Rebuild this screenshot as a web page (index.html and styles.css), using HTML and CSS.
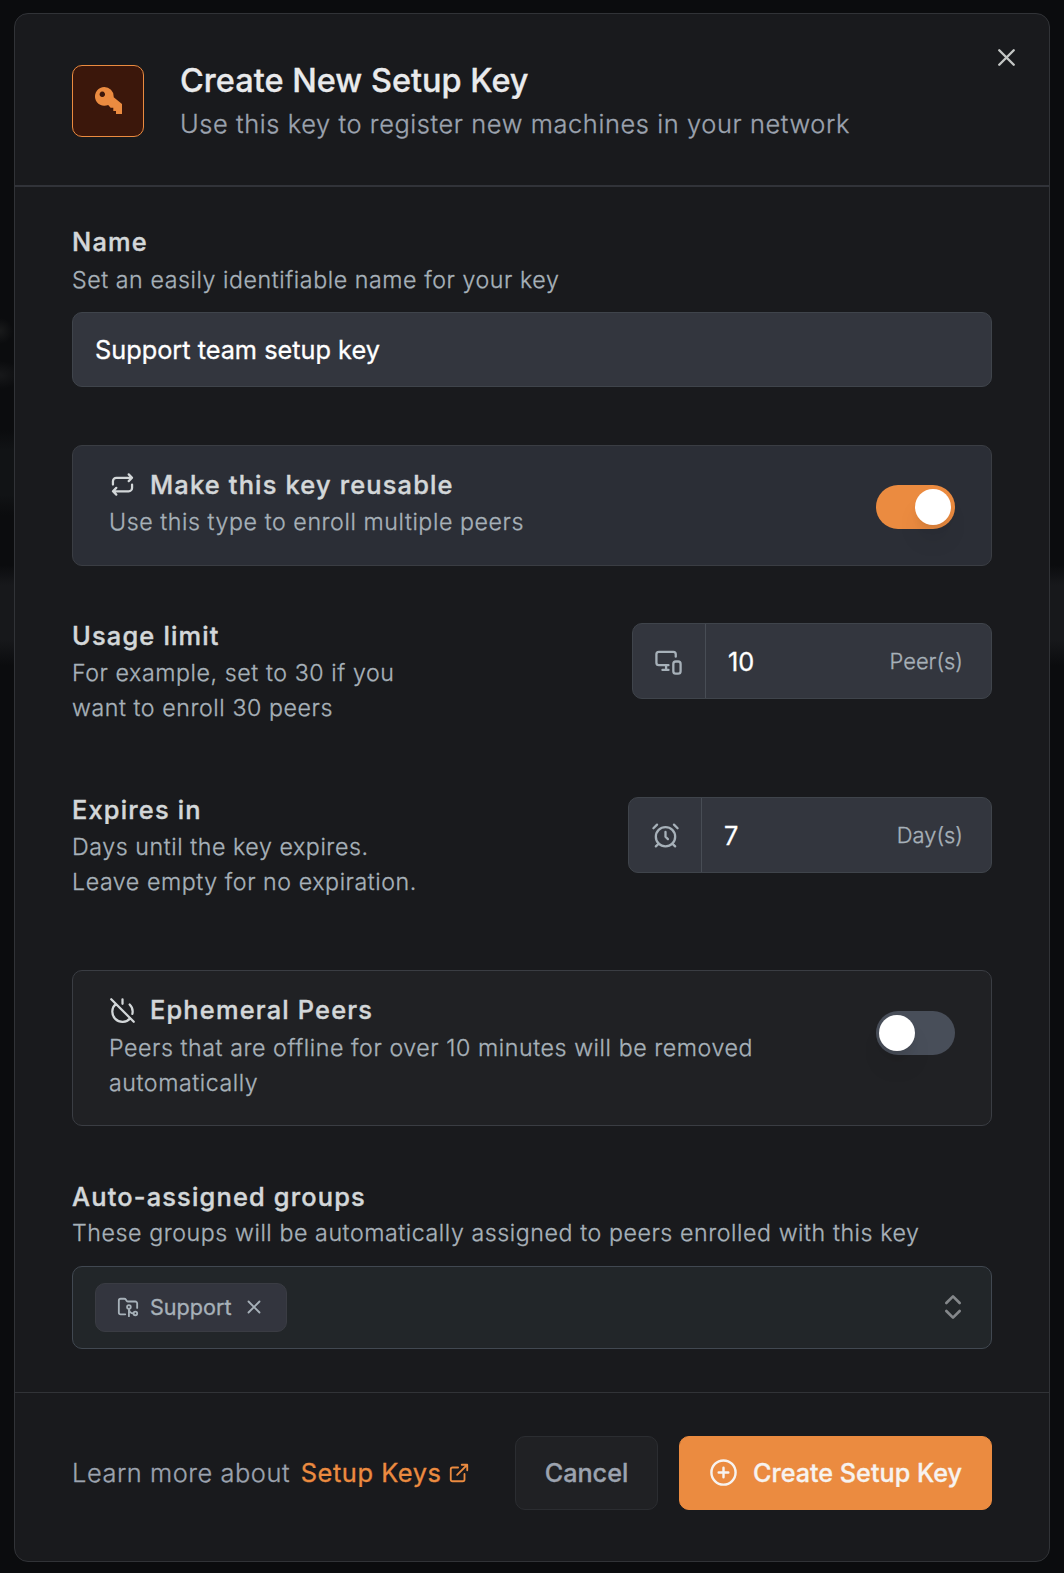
FILE: index.html
```html
<!DOCTYPE html>
<html lang="en">
<head>
<meta charset="utf-8">
<title>Create New Setup Key</title>
<link rel="stylesheet" href="styles.css">
</head>
<body>
<div class="modal" role="dialog">
  <header class="modal-header">
    <div class="key-box">
      <svg width="28" height="28" viewBox="0 0 28 28"><path fill="currentColor" fill-rule="evenodd" d="M10.300 0a9.400 9.400 0 0 1 9.400 9.400v.9L28 17v10h-6v-3h-2.700v-3.300h-2.700l-2.400-2.700A9.400 9.400 0 1 1 10.300 0zM8.300 4.600a2.700 2.700 0 1 0 .01 0z"/></svg>
    </div>
    <div class="heading">
      <h1>Create New Setup Key</h1>
      <p>Use this key to register new machines in your network</p>
    </div>
    <button class="close" aria-label="Close"><svg class="icon" width="29" height="29" viewBox="0 0 24 24"><path d="M18 6 6 18M6 6l12 12"/></svg></button>
  </header>

  <main class="modal-body">
    <section class="name-field">
      <label class="label">Name</label>
      <p class="help">Set an easily identifiable name for your key</p>
      <div class="input name-input">Support team setup key</div>
    </section>

    <section class="card card-on">
      <div>
        <div class="label"><svg class="icon" width="27" height="27" viewBox="0 0 24 24"><path d="M3.500 12V9a3 3 0 0 1 3-3h14m-3-3 3 3-3 3M20.500 12v3a3 3 0 0 1-3 3h-14m3 3-3-3 3-3"/></svg>Make this key reusable</div>
        <p class="help">Use this type to enroll multiple peers</p>
      </div>
      <span class="toggle toggle-on"><i></i></span>
    </section>

    <section class="row usage">
      <div>
        <div class="label">Usage limit</div>
        <p class="help">For example, set to 30 if you<br>want to enroll 30 peers</p>
      </div>
      <div class="input number usage-input">
        <span class="prefix"><svg class="icon" width="29" height="29" viewBox="0 0 24 24"><path d="M18 8V6a2 2 0 0 0-2-2H4a2 2 0 0 0-2 2v7a2 2 0 0 0 2 2h8M10 19v-3.960 3.150M7 19h5"/><rect width="6" height="10" x="16" y="12" rx="2"/></svg></span>
        <span class="value">10</span><span class="suffix">Peer(s)</span>
      </div>
    </section>

    <section class="row expires">
      <div>
        <div class="label">Expires in</div>
        <p class="help">Days until the key expires.<br>Leave empty for no expiration.</p>
      </div>
      <div class="input number expires-input">
        <span class="prefix"><svg class="icon" width="29" height="29" viewBox="0 0 24 24"><circle cx="12" cy="13" r="8"/><path d="M12 9v4l2 2M5 3 2 6M22 6l-3-3M6.380 18.700 4 21M17.640 18.670 20 21"/></svg></span>
        <span class="value">7</span><span class="suffix">Day(s)</span>
      </div>
    </section>

    <section class="card card-off">
      <div>
        <div class="label"><svg class="icon" width="27" height="27" viewBox="0 0 24 24"><path d="M18.360 6.640A9 9 0 0 1 20.770 15M6.160 6.160a9 9 0 1 0 12.680 12.680M12 2v4M2 2l20 20"/></svg>Ephemeral Peers</div>
        <p class="help">Peers that are offline for over 10 minutes will be removed<br>automatically</p>
      </div>
      <span class="toggle"><i></i></span>
    </section>

    <section class="groups">
      <div class="label">Auto-assigned groups</div>
      <p class="help">These groups will be automatically assigned to peers enrolled with this key</p>
      <div class="select">
        <span class="badge">
          <svg class="icon" width="22" height="22" viewBox="0 0 24 24"><path d="M9 20H4a2 2 0 0 1-2-2V5a2 2 0 0 1 2-2h3.900a2 2 0 0 1 1.690.9l.81 1.200a2 2 0 0 0 1.670.9H20a2 2 0 0 1 2 2v5"/><circle cx="13" cy="12" r="2"/><path d="M18 19c-2.800 0-5-2.200-5-5v8"/><circle cx="20" cy="19" r="2"/></svg>
          <span>Support</span>
          <svg class="icon" width="22" height="22" viewBox="0 0 24 24"><path d="M18 6 6 18M6 6l12 12"/></svg>
        </span>
        <svg class="icon chevrons" width="32" height="32" viewBox="0 0 24 24"><path d="m7 15 5 5 5-5M7 9l5-5 5 5"/></svg>
      </div>
    </section>
  </main>

  <footer class="modal-footer">
    <p class="learn">Learn more about <a>Setup Keys<svg class="icon" width="22" height="22" viewBox="0 0 24 24"><path d="M15 3h6v6M10 14 21 3M18 13v6a2 2 0 0 1-2 2H5a2 2 0 0 1-2-2V8a2 2 0 0 1 2-2h6"/></svg></a></p>
    <button class="btn cancel">Cancel</button>
    <button class="btn create"><svg class="icon" width="29" height="29" viewBox="0 0 24 24"><circle cx="12" cy="12" r="10"/><path d="M8 12h8M12 8v8"/></svg>Create Setup Key</button>
  </footer>
</div>
</body>
</html>
```
FILE: styles.css
```css
* { box-sizing: border-box; }

body {
  margin: 0;
  height: 1573px;
  padding: 13px 14px 11px;
  overflow: hidden;
  font-family: Inter, "Liberation Sans", sans-serif;
  -webkit-text-stroke: 0.300px currentColor;
  background:
    radial-gradient(circle at 0 331px, #191a1b, transparent 13px),
    radial-gradient(ellipse 22px 14px at 0 375px, #17181a, transparent),
    linear-gradient(transparent 430px, #111315 450px, #111315 495px, transparent 515px) 0 0 / 14px 100% no-repeat,
    linear-gradient(transparent 565px, #17181b 585px, #17181b 640px, transparent 665px),
    #0b0c0e;
}

h1, p { margin: 0; font-weight: 400; }
button { font: inherit; }

.icon {
  fill: none;
  stroke: currentColor;
  stroke-width: 2;
  stroke-linecap: round;
  stroke-linejoin: round;
  flex: none;
}

.modal {
  width: 1036px;
  height: 1549px;
  display: flex;
  flex-direction: column;
  border: 1px solid #313337;
  border-radius: 14px;
  background: #191a1d;
}

.modal-header {
  height: 173px;
  flex: none;
  display: flex;
  align-items: flex-start;
  padding: 51px 28px 0 57px;
  border-bottom: 2px solid #313339;
}

.key-box {
  width: 72px;
  height: 72px;
  display: flex;
  align-items: center;
  justify-content: center;
  border: 1px solid #eb8b40;
  border-radius: 10px;
  color: #eb8b40;
  background: #3b170b;
}

.heading { flex: 1; padding-left: 36px; }
.heading h1 {
  margin-top: -4px;
  font-size: 32.500px;
  line-height: 40px;
  font-weight: 500;
  color: #e9eaec;
}
.heading p {
  margin-top: 4px;
  font-size: 25.400px;
  line-height: 38px;
  font-weight: 300;
  letter-spacing: 0.600px;
  color: #9ca3af;
}

.close {
  display: flex;
  margin-top: -22px;
  padding: 0;
  border: 0;
  background: none;
  color: #c3c6c4;
}

.modal-body { flex: 1; padding: 36px 57px 0 57px; }

.label {
  display: flex;
  align-items: center;
  height: 36px;
  font-size: 25.400px;
  font-weight: 500;
  letter-spacing: 1.180px;
  color: #d3d7d9;
  -webkit-text-stroke-width: 0.400px;
}
.help {
  margin-top: 3px;
  font-size: 23.200px;
  line-height: 34.500px;
  font-weight: 300;
  letter-spacing: 0.570px;
  color: #a7b1b9;
}

.input {
  display: flex;
  align-items: center;
  height: 76px;
  border: 1px solid #3f444b;
  border-radius: 10px;
  background: #33363e;
  color: #fff;
  font-size: 25.300px;
}
.name-input { height: 75px; margin-top: 14.500px; padding: 0 22px 1px; }
.name-field .help { margin-top: 4px; }

.card {
  display: flex;
  justify-content: space-between;
  padding: 20px 36px 0;
  border: 1px solid #3a3d43;
  border-radius: 10px;
}
.card .label .icon { margin-right: 14px; }
.card-on { height: 121px; margin-top: 58px; background: #2b2e36; }
.card-off { height: 156px; margin-top: 72px; background: #202124; }
.card-off .help { margin-top: 4px; }
.card-off .label .icon { margin-top: 2px; }

.toggle {
  width: 79px;
  height: 44px;
  margin-top: 19px;
  padding: 4px 3px;
  border-radius: 22px;
  background: #484e59;
}
.toggle i {
  display: block;
  width: 36px;
  height: 36px;
  border-radius: 50%;
  background: #fff;
  box-shadow: 0 18px 26px -5px rgba(0, 0, 0, .1), 0 6px 10px -4px rgba(0, 0, 0, .1);
}
.card-off .toggle { margin-top: 20px; }
.toggle-on { background: #eb8b40; }
.toggle-on i { margin-left: 36px; }

.row { display: flex; justify-content: space-between; height: 107px; }
.usage { margin-top: 51px; }
.expires { margin-top: 67px; }
.number { margin-top: 6px; }
.usage-input { width: 360px; }
.expires-input { width: 364px; }
.prefix {
  width: 73px;
  height: 100%;
  display: flex;
  align-items: center;
  justify-content: center;
  border-right: 1px solid #484d55;
  color: #a7b1b9;
}
.prefix .icon { stroke-width: 1.900; }
.usage-input .prefix { padding-right: 2px; }
.value { padding-left: 22px; }
.suffix {
  margin-left: auto;
  padding-right: 28px;
  font-size: 21.900px;
  font-weight: 300;
  color: #a7b1b9;
}

.groups { margin-top: 52px; }
.groups .help { margin-top: 2px; }
.select {
  height: 83px;
  margin-top: 15.500px;
  display: flex;
  align-items: center;
  justify-content: space-between;
  padding: 0 22px 0 22px;
  border: 1px solid #414851;
  border-radius: 10px;
  background: #222629;
}
.badge {
  width: 192px;
  height: 49px;
  display: flex;
  align-items: center;
  padding: 0 0 1px 21px;
  border: 1px solid #3a3c43;
  border-radius: 10px;
  background: #33353e;
  color: #a7b1b9;
  font-size: 21.600px;
}
.badge span { margin: 0 11px; }
.chevrons { margin-bottom: 2px; color: #84878a; }

.modal-footer {
  height: 169px;
  flex: none;
  display: flex;
  padding: 43px 57px 0 57px;
  border-top: 1px solid #313337;
}
.learn {
  flex: 1;
  font-size: 25.400px;
  line-height: 74px;
  font-weight: 300;
  letter-spacing: 0.550px;
  color: #9ca3af;
  white-space: nowrap;
}
.learn a { margin-left: 3px; font-weight: 400; color: #eb8b40; }
.learn .icon { margin-left: 7px; vertical-align: -2px; }

.btn {
  height: 74px;
  display: flex;
  align-items: center;
  justify-content: center;
  padding: 0 0 1px;
  border: 1px solid #2b2d31;
  border-radius: 10px;
  font-size: 25.200px;
  font-weight: 500;
}
.cancel { width: 143px; background: #202124; color: #9ca3af; }
.create {
  width: 313px;
  margin-left: 21px;
  gap: 15px;
  border-color: #eb8b40;
  background: #eb8b40;
  color: #f7f3f0;
}
```
